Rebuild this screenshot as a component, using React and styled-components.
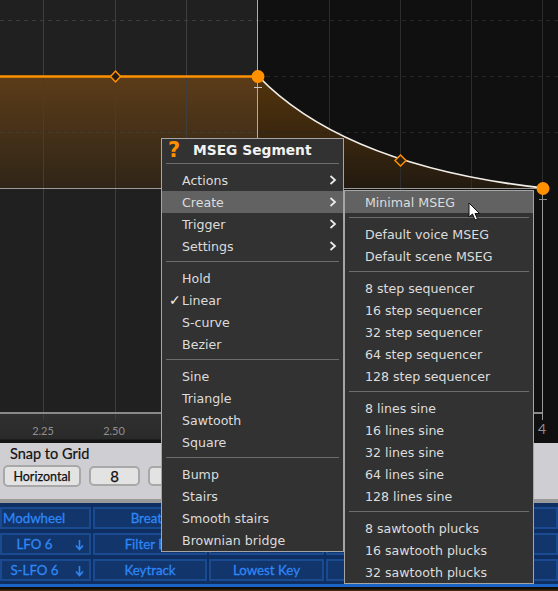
import styled, { createGlobalStyle } from "styled-components";

const GlobalStyle = createGlobalStyle`
  html, body {
    margin: 0;
    padding: 0;
    background: #0c0c0c;
  }
`;

const Screen = styled.div`
  position: relative;
  width: 558px;
  height: 591px;
  overflow: hidden;
  display: flex;
  flex-direction: column;
  font-family: "Lato", sans-serif;
`;

const GraphSvg = styled.svg`
  display: block;
  flex: none;
`;

const SnapPanel = styled.div`
  flex: none;
  height: 60px;
  box-sizing: border-box;
  padding: 0 0 0 3px;
  background: #cfcfd3;
  border-bottom: 4px solid #9a9a9a;
  color: #111;
`;

const SnapTitle = styled.div`
  font-size: 14.5px;
  line-height: 17px;
  padding: 2px 0 0 7px;
  -webkit-text-stroke: 0.2px #111;
`;

const SnapRow = styled.div`
  display: flex;
  gap: 8px;
  align-items: center;
  margin-top: 3px;
`;

const SnapButton = styled.div`
  box-sizing: border-box;
  width: ${(p) => p.$w}px;
  height: ${(p) => p.$h}px;
  display: flex;
  align-items: center;
  justify-content: center;
  background: #e3e3e3;
  border: 2px solid #a8a8a8;
  border-radius: 5px;
  font-size: ${(p) => p.$size}px;
  color: #111;
  -webkit-text-stroke: 0.25px #111;
`;

const ModGrid = styled.div`
  flex: none;
  height: 84px;
  box-sizing: border-box;
  display: grid;
  grid-template-columns: 91px 114px 115px 115px 115px 20px;
  grid-auto-rows: 22px;
  gap: 4px 2px;
  padding: 4px 0 0 0;
  background: #0f2f62;
  border-bottom: 3px solid #1b63c4;
`;

const ModCell = styled.div`
  box-sizing: border-box;
  position: relative;
  display: flex;
  align-items: center;
  justify-content: ${(p) => (p.$left ? "flex-start" : "center")};
  padding-left: ${(p) => (p.$left ? "1px" : "0")};
  padding-right: ${(p) => (p.$arrow ? "22px" : "0")};
  background: #12356b;
  border: 2px solid #1a4a90;
  color: #2f86f5;
  font-size: 13.3px;
  -webkit-text-stroke: 0.3px #2f86f5;
  white-space: nowrap;
  overflow: hidden;
`;

const ArrowMark = styled.svg`
  position: absolute;
  right: 5px;
  top: 4px;
`;

const BottomStrip = styled.div`
  flex: 1;
  background: linear-gradient(#100c06 40%, #4a3214);
`;

const Menu = styled.div`
  position: absolute;
  left: ${(p) => p.$left}px;
  top: ${(p) => p.$top}px;
  width: ${(p) => p.$width}px;
  box-sizing: border-box;
  background: #323232;
  border: 1px solid #a5a5a5;
  font-family: "DejaVu Sans", sans-serif;
  font-size: 12.6px;
  color: #dcdcdc;
`;

const MenuHeader = styled.div`
  height: 24px;
  position: relative;
  padding-left: 31px;
  font-weight: 700;
  font-size: 13.8px;
  line-height: 23px;
  color: #f2f2f2;
`;

const HelpMark = styled.span`
  position: absolute;
  left: 6px;
  top: 0;
  font-size: 21px;
  font-weight: 700;
  color: #ff9000;
`;

const Divider = styled.div`
  height: 1px;
  margin: ${(p) => p.$before}px 4px 5px;
  background: #6c6c6c;
`;

const Item = styled.div`
  position: relative;
  height: 22px;
  line-height: 24px;
  padding-left: ${(p) => p.$indent}px;
  background: ${(p) => (p.$active ? "#626262" : "transparent")};
  white-space: nowrap;
`;

const Check = styled.span`
  position: absolute;
  left: 7px;
  top: -1px;
  font-size: 14px;
  font-weight: 700;
  color: #f0f0f0;
`;

const Chevron = styled.svg`
  position: absolute;
  right: 6px;
  top: 6px;
`;

const Cursor = styled.svg`
  position: absolute;
  left: 468px;
  top: 202px;
`;

const verticals = [43, 115, 186, 257, 329, 400, 471, 542];

function Graph() {
  return (
    <GraphSvg width="558" height="443" viewBox="0 0 558 443">
      <defs>
        <linearGradient id="fill" x1="0" y1="76" x2="0" y2="190" gradientUnits="userSpaceOnUse">
          <stop offset="0" stopColor="#5c3c18" />
          <stop offset="1" stopColor="#2f2518" />
        </linearGradient>
        <linearGradient id="fillRight" x1="0" y1="76" x2="0" y2="190" gradientUnits="userSpaceOnUse">
          <stop offset="0" stopColor="#54340c" />
          <stop offset="1" stopColor="#221a10" />
        </linearGradient>
        <linearGradient id="axis" x1="0" y1="414" x2="0" y2="443" gradientUnits="userSpaceOnUse">
          <stop offset="0" stopColor="#303030" />
          <stop offset="0.85" stopColor="#2a2a2a" />
          <stop offset="0.9" stopColor="#141414" />
        </linearGradient>
      </defs>
      <rect width="258" height="414" fill="#202020" />
      <rect x="258" width="300" height="414" fill="#101010" />
      <rect y="414" width="258" height="29" fill="url(#axis)" />
      <rect x="258" y="414" width="300" height="29" fill="#101010" />
      <rect y="77" width="258" height="111" fill="url(#fill)" />
      <path d="M258 77C310 130 400 172 543 188H258Z" fill="url(#fillRight)" />
      {verticals.map((x) => (
        <line key={x} x1={x + 0.5} x2={x + 0.5} y1="0" y2="420" stroke={x > 257 ? "#2c2c2c" : "#3e3e3e"} />
      ))}
      {[20, 76, 132].map((y) => (
        <g key={y}>
          <line x1="0" x2="258" y1={y + 0.5} y2={y + 0.5} stroke="#3c3c3c" strokeDasharray="4 4" />
          <line x1="258" x2="558" y1={y + 0.5} y2={y + 0.5} stroke="#262626" strokeDasharray="4 4" />
        </g>
      ))}
      <line x1="0" x2="543" y1="188.5" y2="188.5" stroke="#9a9a9a" />
      <line x1="0" x2="543" y1="413" y2="413" stroke="#8a8a8a" strokeWidth="2" />
      <line x1="257.5" x2="257.5" y1="0" y2="188" stroke="#c8a67e" />
      <line x1="542.5" x2="542.5" y1="188" y2="420" stroke="#9a9a9a" />
      <line x1="0" x2="258" y1="76.5" y2="76.5" stroke="#ff9000" strokeWidth="2.5" />
      <path d="M258 76C310 130 400 172 543 188" fill="none" stroke="#f2efe9" strokeWidth="1.8" />
      <path d="M115.500 71l5 5.500l-5 5.500l-5-5.500Z" fill="#221c12" stroke="#ff9000" strokeWidth="1.500" />
      <path d="M400.500 155l5.500 5.500l-5.500 5.500l-5.500-5.500Z" fill="#2a2013" stroke="#ff9000" strokeWidth="1.500" />
      <circle cx="258" cy="76.500" r="6.500" fill="#ff9000" />
      <circle cx="543" cy="188.500" r="6.500" fill="#ff9000" />
      <line x1="254" x2="262" y1="87.500" y2="87.500" stroke="#c8c8c8" />
      <line x1="539" x2="547" y1="199.500" y2="199.500" stroke="#8a8a8a" />
      <text x="43" y="435" fontSize="11" fill="#8f8f8f" textAnchor="middle" fontFamily="Lato, sans-serif">2.25</text>
      <text x="114" y="435" fontSize="11" fill="#8f8f8f" textAnchor="middle" fontFamily="Lato, sans-serif">2.50</text>
      <text x="542" y="434" fontSize="14" fill="#8f8f8f" textAnchor="middle" fontFamily="Lato, sans-serif">4</text>
    </GraphSvg>
  );
}

const mainGroups = [
  ["Actions", "Create", "Trigger", "Settings"],
  ["Hold", "Linear", "S-curve", "Bezier"],
  ["Sine", "Triangle", "Sawtooth", "Square"],
  ["Bump", "Stairs", "Smooth stairs", "Brownian bridge"],
];

const subGroups = [
  ["Minimal MSEG"],
  ["Default voice MSEG", "Default scene MSEG"],
  ["8 step sequencer", "16 step sequencer", "32 step sequencer", "64 step sequencer", "128 step sequencer"],
  ["8 lines sine", "16 lines sine", "32 lines sine", "64 lines sine", "128 lines sine"],
  ["8 sawtooth plucks", "16 sawtooth plucks", "32 sawtooth plucks"],
];

const modRows = [
  [["Modwheel", true], ["Breath"], [""], [""], [""], [""]],
  [["LFO 6", false, true], ["Filter EG"], [""], [""], [""], [""]],
  [["S-LFO 6", false, true], ["Keytrack"], ["Lowest Key"], [""], [""], [""]],
];

function App() {
  return (
    <Screen>
      <GlobalStyle />
      <Graph />
      <SnapPanel>
        <SnapTitle>Snap to Grid</SnapTitle>
        <SnapRow>
          <SnapButton $w={78} $h={22} $size={12.5}>Horizontal</SnapButton>
          <SnapButton $w={51} $h={20} $size={15}>8</SnapButton>
          <SnapButton $w={51} $h={20} $size={15}>2</SnapButton>
        </SnapRow>
      </SnapPanel>
      <ModGrid>
        {modRows.flat().map(([label, left, arrow], i) => (
          <ModCell key={i} $left={left} $arrow={arrow}>
            {label}
            {arrow && (
              <ArrowMark width="9" height="12" viewBox="0 0 9 12">
                <path d="M4.500 1v9M1 6.500l3.500 4l3.500-4" fill="none" stroke="#2f86f5" strokeWidth="1.600" />
              </ArrowMark>
            )}
          </ModCell>
        ))}
      </ModGrid>
      <BottomStrip />

      <Menu $left={161} $top={138} $width={183}>
        <MenuHeader>
          <HelpMark>?</HelpMark>
          MSEG Segment
        </MenuHeader>
        {mainGroups.map((group, g) => (
          <div key={g}>
            <Divider $before={g === 0 ? 0 : 4} />
            {group.map((label) => (
              <Item key={label} $indent={20} $active={label === "Create"}>
                {label === "Linear" && <Check>✓</Check>}
                {label}
                {g === 0 && (
                  <Chevron width="8" height="10" viewBox="0 0 8 10">
                    <path d="M1.500 1l4.500 4l-4.500 4" fill="none" stroke="#e8e8e8" strokeWidth="1.800" />
                  </Chevron>
                )}
              </Item>
            ))}
          </div>
        ))}
      </Menu>

      <Menu $left={344} $top={190} $width={190}>
        {subGroups.map((group, g) => (
          <div key={g}>
            {g > 0 && <Divider $before={4} />}
            {group.map((label) => (
              <Item key={label} $indent={20} $active={label === "Minimal MSEG"}>
                {label}
              </Item>
            ))}
          </div>
        ))}
      </Menu>

      <Cursor width="14" height="20" viewBox="0 0 14 20">
        <path d="M1 1v14l3.500-3l2.500 6l2.500-1l-2.500-5.500h4.500Z" fill="#fff" stroke="#111" strokeWidth="1" />
      </Cursor>
    </Screen>
  );
}

export default App;
